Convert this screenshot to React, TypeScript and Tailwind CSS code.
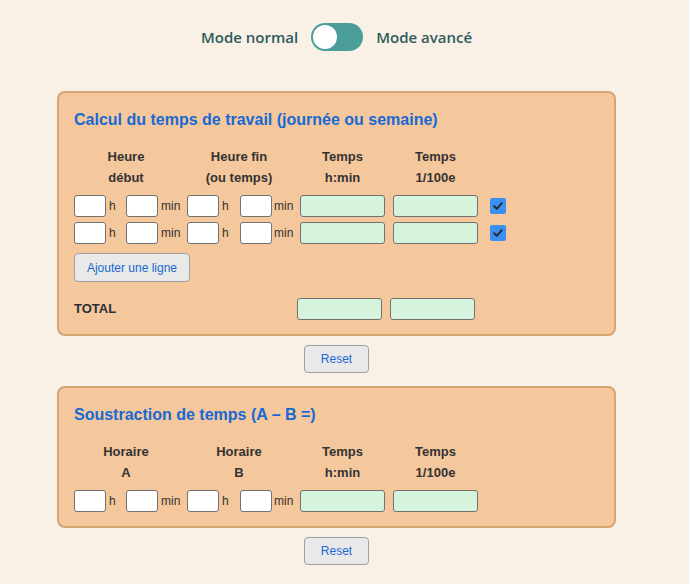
import React from "react";

const arial = { fontFamily: '"Liberation Sans", Arial, sans-serif' };

function SmallInput() {
  return <div className="w-[32px] h-[22px] shrink-0 rounded-[3px] border border-[#727272] bg-white" />;
}

function GreenInput() {
  return <div className="w-[85px] h-[22px] shrink-0 rounded-[3px] border border-[#727272] bg-[#d6f3de]" />;
}

function Label({ text, w, pl }: { text: string; w: string; pl: string }) {
  return (
    <span className={`${w} ${pl} shrink-0 text-[12px] leading-[22px] text-[#333333]`}>{text}</span>
  );
}

function Check() {
  return (
    <div className="ml-[12px] w-[16px] h-[16px] rounded-[2px] bg-[#3a8ff3] flex items-center justify-center">
      <svg width="12" height="12" viewBox="0 0 12 12">
        <path d="M2.2 6.2 L4.8 8.8 L9.8 3.2" fill="none" stroke="#2a2a2a" strokeWidth="2" strokeLinecap="round" strokeLinejoin="round" />
      </svg>
    </div>
  );
}

function InputRow({ check }: { check: boolean }) {
  return (
    <div className="flex items-center h-[22px]">
      <SmallInput />
      <Label text="h" w="w-[20px]" pl="pl-[3px]" />
      <SmallInput />
      <Label text="min" w="w-[29px]" pl="pl-[3px]" />
      <SmallInput />
      <Label text="h" w="w-[21px]" pl="pl-[3px]" />
      <SmallInput />
      <Label text="min" w="w-[28px]" pl="pl-[2px]" />
      <GreenInput />
      <div className="ml-[8px]">
        <GreenInput />
      </div>
      {check && <Check />}
    </div>
  );
}

function Headers({ h }: { h: [string, string][] }) {
  const widths = ["w-[104px]", "w-[104px]", "w-[85px]", "w-[85px]"];
  const margins = ["", "ml-[9px]", "ml-[9px]", "ml-[8px]"];
  return (
    <div className="flex mt-[17px] text-[13px] leading-[21px] font-bold text-[#333333]">
      {h.map((pair, i) => (
        <div key={i} className={`${widths[i]} ${margins[i]} text-center shrink-0`}>
          <div>{pair[0]}</div>
          <div>{pair[1]}</div>
        </div>
      ))}
    </div>
  );
}

function Title({ text }: { text: string }) {
  return <div className="text-[16px] leading-[18px] font-bold text-[#1769d3]">{text}</div>;
}

function Btn({ text, w, h }: { text: string; w: string; h: string }) {
  return (
    <div
      className={`${w} ${h} rounded-[4px] border border-[#a0a0a0] bg-[#e9e9e9] flex items-center justify-center text-[12px] text-[#1769d3]`}
      style={arial}
    >
      {text}
    </div>
  );
}

export default function App() {
  return (
    <div className="min-h-[584px] w-full bg-[#f9f0e6]">
      <div className="w-[673px] flex flex-col items-center pt-[23px]">
        <div
          className="flex items-center h-[28px] text-[15px] font-semibold text-[#2d5c5e]"
          style={{ fontFamily: '"Open Sans", "Noto Sans", sans-serif' }}
        >
          <span>Mode normal</span>
          <div className="ml-[13px] mr-[13px] w-[52px] h-[28px] rounded-full bg-[#4a9d98] flex items-center pl-[2px]">
            <div className="w-[24px] h-[24px] rounded-full bg-white" />
          </div>
          <span>Mode avancé</span>
        </div>

        <div
          className="mt-[40px] w-[559px] rounded-[8px] border-2 border-[#d6a472] bg-[#f5c79c] pt-[18px] px-[15px] pb-[14px]"
          style={arial}
        >
          <Title text="Calcul du temps de travail (journée ou semaine)" />
          <Headers
            h={[
              ["Heure", "début"],
              ["Heure fin", "(ou temps)"],
              ["Temps", "h:min"],
              ["Temps", "1/100e"],
            ]}
          />
          <div className="mt-[7px] flex flex-col gap-[5px]">
            <InputRow check />
            <InputRow check />
          </div>
          <div className="mt-[9px]">
            <Btn text="Ajouter une ligne" w="w-[116px]" h="h-[29px]" />
          </div>
          <div className="mt-[16px] flex items-center h-[22px]">
            <span className="w-[223px] text-[13px] font-bold text-[#2b2f36]">TOTAL</span>
            <GreenInput />
            <div className="ml-[8px]">
              <GreenInput />
            </div>
          </div>
        </div>

        <div className="mt-[9px]">
          <Btn text="Reset" w="w-[65px]" h="h-[28px]" />
        </div>

        <div
          className="mt-[13px] w-[559px] rounded-[8px] border-2 border-[#d6a472] bg-[#f5c79c] pt-[18px] px-[15px] pb-[14px]"
          style={arial}
        >
          <Title text="Soustraction de temps (A – B =)" />
          <Headers
            h={[
              ["Horaire", "A"],
              ["Horaire", "B"],
              ["Temps", "h:min"],
              ["Temps", "1/100e"],
            ]}
          />
          <div className="mt-[7px]">
            <InputRow check={false} />
          </div>
        </div>

        <div className="mt-[9px]">
          <Btn text="Reset" w="w-[65px]" h="h-[28px]" />
        </div>
      </div>
    </div>
  );
}
